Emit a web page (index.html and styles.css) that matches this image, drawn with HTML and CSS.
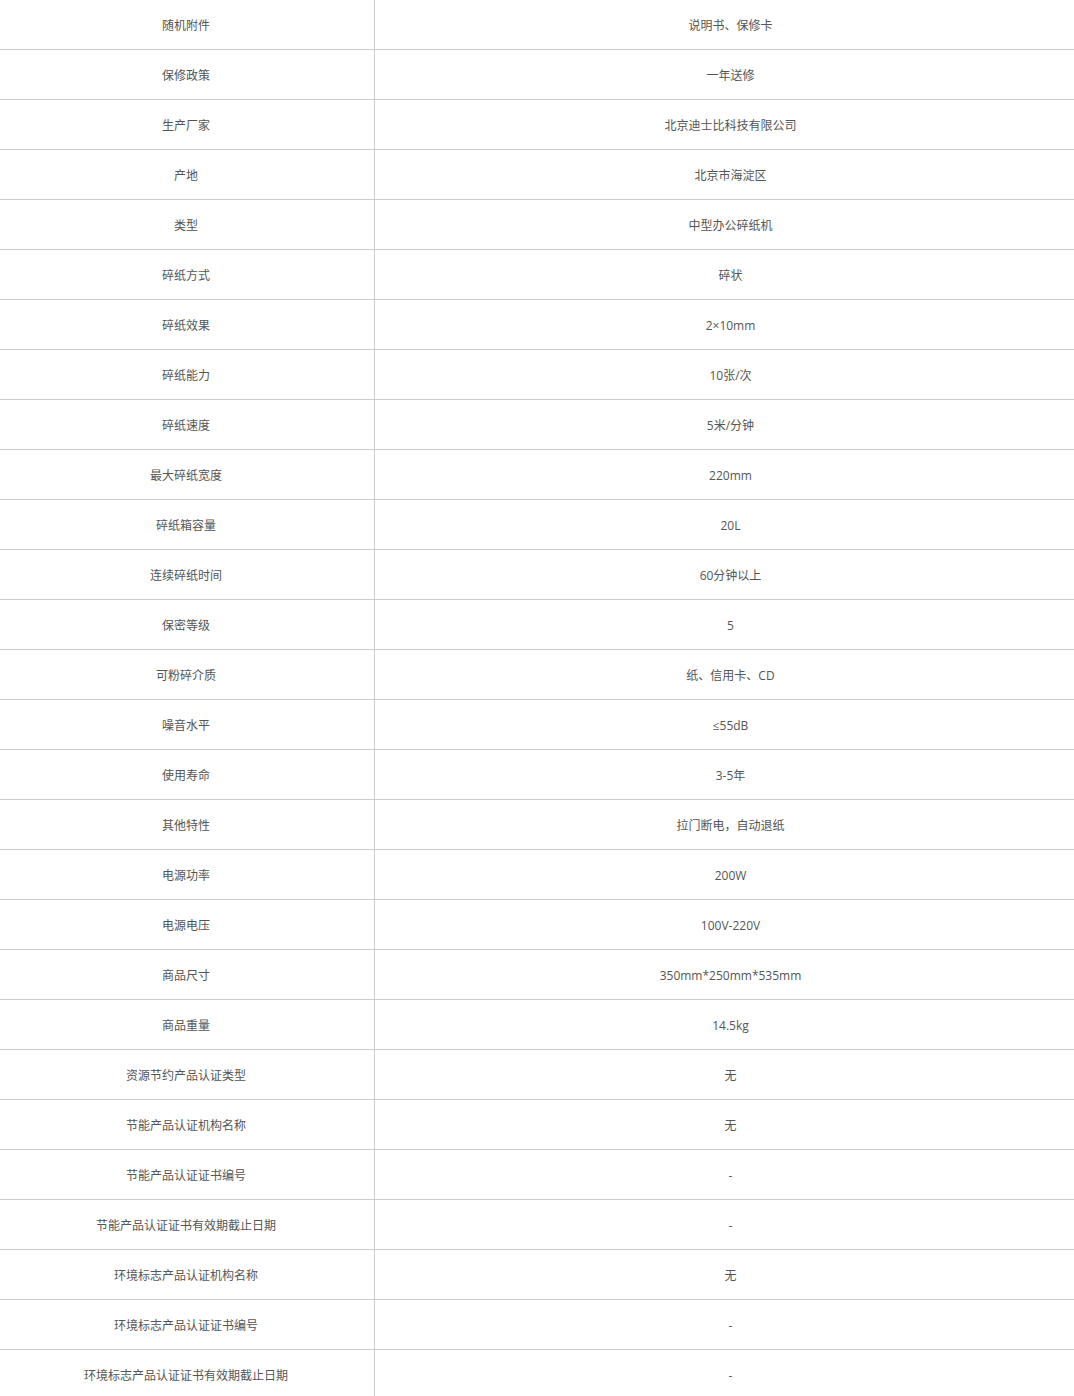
FILE: index.html
```html
<!DOCTYPE html>
<html lang="zh-CN">
<head>
<meta charset="utf-8">
<title>参数</title>
<link rel="stylesheet" href="styles.css">
</head>
<body>
<table class="spec">
<tbody>
<tr><td class="k">随机附件</td><td class="v">说明书、保修卡</td></tr>
<tr><td class="k">保修政策</td><td class="v">一年送修</td></tr>
<tr><td class="k">生产厂家</td><td class="v">北京迪士比科技有限公司</td></tr>
<tr><td class="k">产地</td><td class="v">北京市海淀区</td></tr>
<tr><td class="k">类型</td><td class="v">中型办公碎纸机</td></tr>
<tr><td class="k">碎纸方式</td><td class="v">碎状</td></tr>
<tr><td class="k">碎纸效果</td><td class="v">2×10mm</td></tr>
<tr><td class="k">碎纸能力</td><td class="v">10张/次</td></tr>
<tr><td class="k">碎纸速度</td><td class="v">5米/分钟</td></tr>
<tr><td class="k">最大碎纸宽度</td><td class="v">220mm</td></tr>
<tr><td class="k">碎纸箱容量</td><td class="v">20L</td></tr>
<tr><td class="k">连续碎纸时间</td><td class="v">60分钟以上</td></tr>
<tr><td class="k">保密等级</td><td class="v">5</td></tr>
<tr><td class="k">可粉碎介质</td><td class="v">纸、信用卡、CD</td></tr>
<tr><td class="k">噪音水平</td><td class="v">≤55dB</td></tr>
<tr><td class="k">使用寿命</td><td class="v">3-5年</td></tr>
<tr><td class="k">其他特性</td><td class="v">拉门断电，自动退纸</td></tr>
<tr><td class="k">电源功率</td><td class="v">200W</td></tr>
<tr><td class="k">电源电压</td><td class="v">100V-220V</td></tr>
<tr><td class="k">商品尺寸</td><td class="v">350mm*250mm*535mm</td></tr>
<tr><td class="k">商品重量</td><td class="v">14.5kg</td></tr>
<tr><td class="k">资源节约产品认证类型</td><td class="v">无</td></tr>
<tr><td class="k">节能产品认证机构名称</td><td class="v">无</td></tr>
<tr><td class="k">节能产品认证证书编号</td><td class="v">-</td></tr>
<tr><td class="k">节能产品认证证书有效期截止日期</td><td class="v">-</td></tr>
<tr><td class="k">环境标志产品认证机构名称</td><td class="v">无</td></tr>
<tr><td class="k">环境标志产品认证证书编号</td><td class="v">-</td></tr>
<tr><td class="k">环境标志产品认证证书有效期截止日期</td><td class="v">-</td></tr>
</tbody>
</table>
</body>
</html>
```
FILE: styles.css
```css
html, body {
  margin: 0;
  padding: 0;
  background: #fff;
}
body {
  font-family: "Open Sans", "Noto Sans CJK SC", sans-serif;
  font-size: 12px;
  color: #555;
}
.spec {
  width: 1074px;
  border-collapse: collapse;
  table-layout: fixed;
}
.spec td {
  height: 47px;
  padding: 2px 0 0 0;
  text-align: center;
  vertical-align: middle;
  border-bottom: 1px solid #ccc;
  line-height: 16px;
}
.spec td.k {
  width: 372px;
  padding-right: 2px;
  border-right: 1px solid #ccc;
}
.spec td.v {
  padding-left: 12px;
}
```
